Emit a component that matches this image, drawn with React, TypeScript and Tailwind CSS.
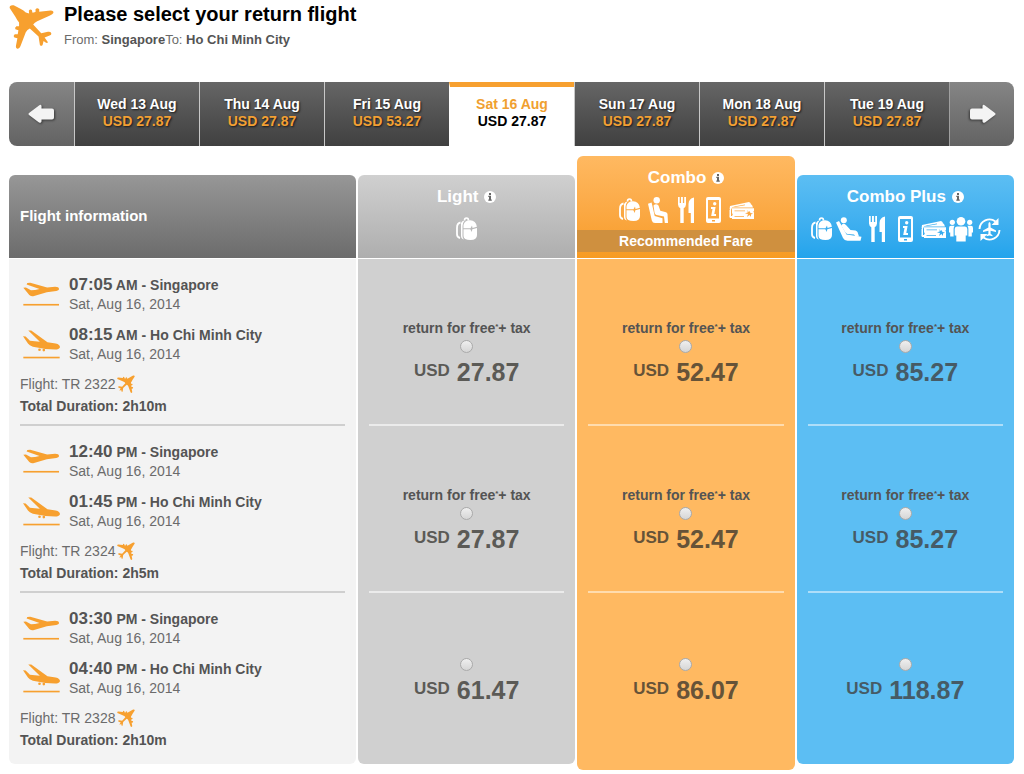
import React, { useState } from "react";
import clsx from "clsx";

interface Day {
  label: string;
  price: string;
}

interface Flight {
  number: string;
  departTime: string;
  departPeriod: string;
  arriveTime: string;
  arrivePeriod: string;
  duration: string;
  returnForFree: boolean;
  prices: string[];
}

const days: Day[] = [
  { label: "Wed 13 Aug", price: "27.87" },
  { label: "Thu 14 Aug", price: "27.87" },
  { label: "Fri 15 Aug", price: "53.27" },
  { label: "Sat 16 Aug", price: "27.87" },
  { label: "Sun 17 Aug", price: "27.87" },
  { label: "Mon 18 Aug", price: "27.87" },
  { label: "Tue 19 Aug", price: "27.87" },
];

const flights: Flight[] = [
  {
    number: "TR 2322",
    departTime: "07:05",
    departPeriod: "AM",
    arriveTime: "08:15",
    arrivePeriod: "AM",
    duration: "2h10m",
    returnForFree: true,
    prices: ["27.87", "52.47", "85.27"],
  },
  {
    number: "TR 2324",
    departTime: "12:40",
    departPeriod: "PM",
    arriveTime: "01:45",
    arrivePeriod: "PM",
    duration: "2h5m",
    returnForFree: true,
    prices: ["27.87", "52.47", "85.27"],
  },
  {
    number: "TR 2328",
    departTime: "03:30",
    departPeriod: "PM",
    arriveTime: "04:40",
    arrivePeriod: "PM",
    duration: "2h10m",
    returnForFree: false,
    prices: ["61.47", "86.07", "118.87"],
  },
];

const PlaneIcon = ({ className }: { className?: string }) => (
  <svg viewBox="12 12 134 134" className={className} fill="#f7a02f" aria-hidden="true">
    <path d="M14 24Q13 14 26 16L46 26Q56 31 62 37L72 40L71 32Q75 26 80 30L82 38L91 36L91 28Q96 22 102 28L102 35L136 31Q146 31 144 39Q142 43 134 46L96 63Q88 67 84 73L108 99L128 95Q136 94 138 99Q139 104 133 106L118 112L128 126Q126 130 121 127L115 122L112 134Q108 139 104 134L100 109L74 85Q66 88 62 96L46 138Q43 146 37 145Q31 144 33 135L37 114L28 112Q23 107 29 102L38 102L40 90L31 87Q28 82 34 78L42 78L42 67Q37 62 31 50Z" />
  </svg>
);

const TakeoffIcon = () => (
  <svg viewBox="69 66 112 72" className="h-6 w-[37px]" fill="#f7a02f" aria-hidden="true">
    <path d="M70 83L78 82L93 91Q105 91 119 87L80 73L82 69L91 68L142 82L166 80Q178 80 178 87Q177 93 164 94L141 97L100 109Q94 110 88 105Z" />
    <rect x="70" y="132" width="108" height="5" />
  </svg>
);

const LandingIcon = () => (
  <svg viewBox="69 201 112 89" className="h-[30px] w-[37px]" fill="#f7a02f" aria-hidden="true">
    <path d="M69 222L77 223L90 236L120 239L85 205L94 205L143 240L168 244Q181 247 181 255Q178 262 166 262L137 261L99 254Q88 250 84 244Z" />
    <circle cx="119" cy="263" r="4" />
    <circle cx="132" cy="264" r="4" />
    <rect x="70" y="284" width="110" height="5" />
  </svg>
);

const ArrowIcon = ({ className }: { className?: string }) => (
  <svg
    viewBox="0 0 27 20"
    className={clsx("h-5 w-[27px] drop-shadow-[1px_1px_1px_rgba(0,0,0,0.5)]", className)}
    fill="#f4f4f4"
    aria-hidden="true"
  >
    <path d="M1 9L11 1.500Q13 0 13.500 2V4.500H24Q26 4.500 26 6.500V13.500Q26 15.500 24 15.500H13.500V17.500Q13 19.500 11 18.500L1 11Q0 10 1 9Z" />
  </svg>
);

const InfoIcon = () => (
  <svg viewBox="0 0 12 12" className="size-3" aria-hidden="true">
    <circle cx="6" cy="6" r="6" fill="#fff" />
    <path d="M5 2h2v2H5zM4.300 4.800H7V8.600h.8V9.700H4.300V8.600H5V5.900h-.7z" fill="#666" />
  </svg>
);

const BagIcon = () => (
  <svg viewBox="0 0 21 24" className="h-6 w-[21px]" fill="#fff" aria-hidden="true">
    <path d="M8.500 3.500Q8.500 1 10.500 1T12.500 3.500" fill="none" stroke="#fff" strokeWidth="1.600" />
    <path d="M4.500 5.500Q1 6 1 11V17Q1 20.500 4 21" fill="none" stroke="#fff" strokeWidth="1.800" />
    <path d="M5 6Q6 3.500 8.500 3.500Q6.500 6 6.500 9V19Q6.500 21 8 22.500Q5 21.500 5 19Z" />
    <path d="M7.500 12.300H14.300L15.800 15L16.300 12.300L21 11V18Q21 23 14.500 23Q7.500 23 7.500 19Z" />
    <path d="M7.500 11.200V8Q8.500 3.200 14 3.200Q20 3.500 20.900 9.700L16.500 11L16 8.500L14.500 11.200Z" />
  </svg>
);

const SeatIcon = () => (
  <svg viewBox="0 0 20 27" className="h-[27px] w-5" fill="#fff" aria-hidden="true">
    <circle cx="8.700" cy="3.200" r="3.200" />
    <path d="M5.500 8.500Q8 6 10.500 8.500L12.300 13.800L18 15.300Q19.300 15.800 19.500 17L20 26H16.800L16 19.500L8.500 18Q7 17.500 6.600 16Z" />
    <path d="M0 6.800L3.600 5.500L6.700 19L14.500 21.300V26H7Q4.500 26 3.800 23.500Z" />
  </svg>
);

const ReclinedSeatIcon = () => (
  <svg viewBox="0 0 26 25" className="h-[25px] w-[26px]" fill="#fff" aria-hidden="true">
    <circle cx="7.800" cy="3.200" r="3" />
    <path d="M5.200 8.500Q7 5.500 10 8L14.500 13L19.500 13.500Q21 14 21.500 15L23 19.500H19.500L18 17.500L11.500 17Q10 16.500 9 15Z" />
    <path d="M0 5.500L3 4L10.500 17.500L25.500 19.800L24.500 23.800H11.500Q8.500 23.800 7 21Z" />
  </svg>
);

const MealIcon = () => (
  <svg viewBox="0 0 16 26" className="h-[26px] w-4" fill="#fff" aria-hidden="true">
    <path d="M0 0H1.700V6H3V0H4.900V6H6.200V0H8V7.500Q7.700 10.500 5.700 11.300V26H2.300V11.300Q.3 10.500 0 7.500Z" />
    <path d="M16 .5V26H12.800V16H10.500V7Q10.700 1.500 16 .5Z" />
  </svg>
);

const DeviceIcon = () => (
  <svg viewBox="0 0 15 26" className="h-[26px] w-[15px]" aria-hidden="true">
    <path
      fill="#fff"
      fillRule="evenodd"
      d="M2 0H13Q15 0 15 2V24Q15 26 13 26H2Q0 26 0 24V2Q0 0 2 0ZM2 3V21.500H13V3ZM6 23V24.500H9V23Z"
    />
    <circle cx="8.700" cy="6.800" r="1.700" fill="#fff" />
    <path d="M5 10H9.600L8.300 17H10V19H5.200L6.500 12H5Z" fill="#fff" />
  </svg>
);

const TicketIcon = () => (
  <svg viewBox="0 0 25 17" className="h-[17px] w-[25px]" fill="#fff" aria-hidden="true">
    <path
      fillRule="evenodd"
      d="M1 4L20 0L21.500 1Q21.500 2.500 23 3L24 5.500H3L1.500 9Q0 7 1 4ZM4 4.700L16 2.600V3.300L6 4.900Z"
    />
    <path d="M.5 8H2V14H4V16H1Q0 15 .5 13Z" />
    <path
      fillRule="evenodd"
      d="M3 6.300H25V9Q23.500 9.500 25 10.500V17H3V14Q4.500 12.500 3 11ZM5.500 8.500V9.300H16V8.500ZM5.500 14V14.700H15V14ZM18 8L19 10.300L16 11.500L19 12L18 15L20.500 13L22 15V12.500L24 11.500L21.500 11L20.500 9L19.800 10Z"
    />
  </svg>
);

const GroupIcon = () => (
  <svg viewBox="0 0 24 25" className="h-[25px] w-6" fill="#fff" aria-hidden="true">
    <circle cx="12" cy="4.300" r="4.300" />
    <circle cx="3.300" cy="5.300" r="2.600" />
    <circle cx="20.700" cy="5.300" r="2.600" />
    <path d="M8 9.500H16Q18.300 9.500 18.300 12V18.500H16.700V24.500H7.300V18.500H5.700V12Q5.700 9.500 8 9.500Z" />
    <path d="M2 8.800H5.500Q4.600 10.500 4.600 12V19.500H1.200V15.500H0V11Q0 8.800 2 8.800ZM22 8.800H18.500Q19.400 10.500 19.400 12V19.500H22.800V15.500H24V11Q24 8.800 22 8.800Z" />
  </svg>
);

const ChangeFlightIcon = () => (
  <svg viewBox="0 0 23 23" className="size-[23px]" fill="#fff" aria-hidden="true">
    <path d="M1.500 11A10 10 0 0 1 17.500 3.500M21.500 12A10 10 0 0 1 5.500 19.500" fill="none" stroke="#fff" strokeWidth="1.900" />
    <path d="M20.500 0V7H13.500ZM2.500 23V16H9.500Z" />
    <path d="M11.500 4Q12.600 4.500 12.600 6V9.500L18 12.500V14L12.600 12.800V15.800L14.500 17.300V18.300L11.500 17.600L8.500 18.300V17.300L10.400 15.800V12.800L5 14V12.500L10.400 9.500V6Q10.400 4.500 11.500 4Z" />
  </svg>
);

const fares = [
  {
    name: "Light",
    recommended: false,
    head: "bg-linear-to-b from-[#d0d0d0] to-[#aeaeae]",
    body: "bg-[#d0d0d0]",
    line: "border-[#ebebeb]",
    price: "text-[#5b5a56]",
    icons: [BagIcon],
  },
  {
    name: "Combo",
    recommended: true,
    head: "bg-linear-to-b from-[#ffb961] to-[#f79b22]",
    body: "bg-[#ffb961]",
    line: "border-[#ffdcae]",
    price: "text-[#665338]",
    icons: [BagIcon, SeatIcon, MealIcon, DeviceIcon, TicketIcon],
  },
  {
    name: "Combo Plus",
    recommended: false,
    head: "bg-linear-to-b from-[#5cbef3] to-[#22a4ec]",
    body: "bg-[#5cbef3]",
    line: "border-[#aedef9]",
    price: "text-[#465b66]",
    icons: [BagIcon, ReclinedSeatIcon, MealIcon, DeviceIcon, TicketIcon, GroupIcon, ChangeFlightIcon],
  },
];

interface LegProps {
  icon: React.ReactNode;
  time: string;
  period: string;
  city: string;
}

const Leg: React.FC<LegProps> = ({ icon, time, period, city }) => (
  <div className="flex">
    <div className="flex h-[38px] w-[49px] shrink-0 items-center pl-[3px]">{icon}</div>
    <div>
      <div className="text-sm/5 font-bold">
        <span className="text-[17px]/5">{time}</span> {period} - {city}
      </div>
      <div className="text-sm/[18px] text-[#6b6b6b]">Sat, Aug 16, 2014</div>
    </div>
  </div>
);

const DayBar = () => {
  const [selected, setSelected] = useState(3);
  const arrow = "flex w-[65px] shrink-0 items-center justify-center bg-linear-to-b from-[#858585] to-[#636363]";

  return (
    <nav className="flex h-16 overflow-hidden rounded-lg" aria-label="Return date">
      <button type="button" className={arrow} aria-label="Earlier dates">
        <ArrowIcon />
      </button>
      {days.map((day, i) => (
        <button
          key={day.label}
          type="button"
          onClick={() => setSelected(i)}
          className={clsx(
            "flex-1 border-l text-sm/[17px] font-bold",
            i === selected
              ? "border-t-[5px] border-l-white border-t-[#f7a02f] bg-white pb-2"
              : "border-l-[#c8c8c8] bg-linear-to-b from-[#666] to-[#404040] pb-[3px] [text-shadow:1px_1px_2px_rgba(0,0,0,0.7)]"
          )}
        >
          <span className={clsx("block", i === selected ? "text-[#f0a02f]" : "text-white")}>{day.label}</span>
          <span className={clsx("block", i === selected ? "text-black" : "text-[#f2a034]")}>USD {day.price}</span>
        </button>
      ))}
      <button type="button" className={clsx(arrow, "border-l border-[#a0a0a0]")} aria-label="Later dates">
        <ArrowIcon className="-scale-x-100" />
      </button>
    </nav>
  );
};

const FareTable = () => (
  <table className="mt-[10px] w-full table-fixed border-collapse text-[#545454]">
    <colgroup>
      <col className="w-[347px]" />
      <col />
      <col />
      <col />
    </colgroup>
    <thead>
      <tr>
        <th scope="col" className="p-0 pb-px align-bottom">
          <div className="flex h-[83px] items-center rounded-t-md bg-linear-to-b from-[#979797] to-[#6c6c6c] px-[11px] text-[15px] text-white">
            Flight information
          </div>
        </th>
        {fares.map((fare) => (
          <th key={fare.name} scope="col" className="p-0 pb-px pl-[2px] align-bottom">
            <div className={clsx("rounded-t-md pt-[10px] text-white", fare.head, fare.recommended ? "pb-[6px]" : "pb-[15px]")}>
              <div className="flex h-6 items-center justify-center gap-[6px] text-[17px]">
                {fare.name}
                <InfoIcon />
              </div>
              <div className="mt-[6px] flex h-7 items-center justify-center">
                {fare.icons.map((Icon, i) => (
                  <span key={i} className="flex w-7 justify-center">
                    <Icon />
                  </span>
                ))}
              </div>
              {fare.recommended && (
                <div className="mt-[6px] bg-[#cf903f] text-sm/[22px]">Recommended Fare</div>
              )}
            </div>
          </th>
        ))}
      </tr>
    </thead>
    <tbody>
      {flights.map((flight, row) => {
        const last = row === flights.length - 1;
        return (
          <tr key={flight.number}>
            <td className="p-0 align-top">
              <div className={clsx("bg-[#f3f3f3] px-[11px]", last && "rounded-b-md pb-1")}>
                <div className={clsx("border-b-2 pt-4 pb-2", last ? "border-transparent" : "border-[#cfcfcf]")}>
                  <Leg icon={<TakeoffIcon />} time={flight.departTime} period={flight.departPeriod} city="Singapore" />
                  <div className="mt-3">
                    <Leg icon={<LandingIcon />} time={flight.arriveTime} period={flight.arrivePeriod} city="Ho Chi Minh City" />
                  </div>
                  <div className="mt-[11px] flex items-center gap-[2px] text-sm/5 text-[#6b6b6b]">
                    Flight: {flight.number}
                    <PlaneIcon className="size-[18px] -scale-x-100" />
                  </div>
                  <div className="mt-[2px] text-sm/5 font-bold">Total Duration: {flight.duration}</div>
                </div>
              </div>
            </td>
            {fares.map((fare, i) => (
              <td key={fare.name} className="p-0 pl-[2px] align-top">
                <div
                  className={clsx(
                    "px-[11px]",
                    fare.body,
                    last && "rounded-b-md",
                    last && (fare.recommended ? "pb-[10px]" : "pb-1")
                  )}
                >
                  <label
                    className={clsx(
                      "flex h-[167px] flex-col items-center border-b-2 font-bold",
                      last ? "border-transparent" : fare.line,
                      flight.returnForFree ? "pt-[59px]" : "pt-[63px]"
                    )}
                  >
                    {flight.returnForFree && (
                      <span className="text-sm/5">
                        return for free<sup className="text-[8px]">*</sup>+ tax
                      </span>
                    )}
                    <input
                      type="radio"
                      name="fare"
                      className="mt-[2px] size-[13px] appearance-none rounded-full border border-[#a9a9a9] bg-linear-to-b from-[#efefef] to-[#d6d6d6] checked:bg-[#545454]"
                    />
                    <span className={clsx("mt-[5px] flex gap-[7px] text-[25px]/7", fare.price)}>
                      <span className="text-[17px]/[26px]">USD</span> {flight.prices[i]}
                    </span>
                  </label>
                </div>
              </td>
            ))}
          </tr>
        );
      })}
    </tbody>
  </table>
);

export default function App() {
  return (
    <main className="min-h-screen bg-white pr-[10px] pl-[9px] font-['Liberation_Sans',Arial,sans-serif]">
      <header className="flex gap-[10px] pt-1">
        <PlaneIcon className="size-[45px]" />
        <div>
          <h1 className="text-xl/5 font-bold text-black">Please select your return flight</h1>
          <p className="mt-2 text-[13px]/4 text-[#6b6b6b]">
            From: <b className="text-[#545454]">Singapore</b>To: <b className="text-[#545454]">Ho Chi Minh City</b>
          </p>
        </div>
      </header>
      <div className="mt-[33px]">
        <DayBar />
        <FareTable />
      </div>
    </main>
  );
}
